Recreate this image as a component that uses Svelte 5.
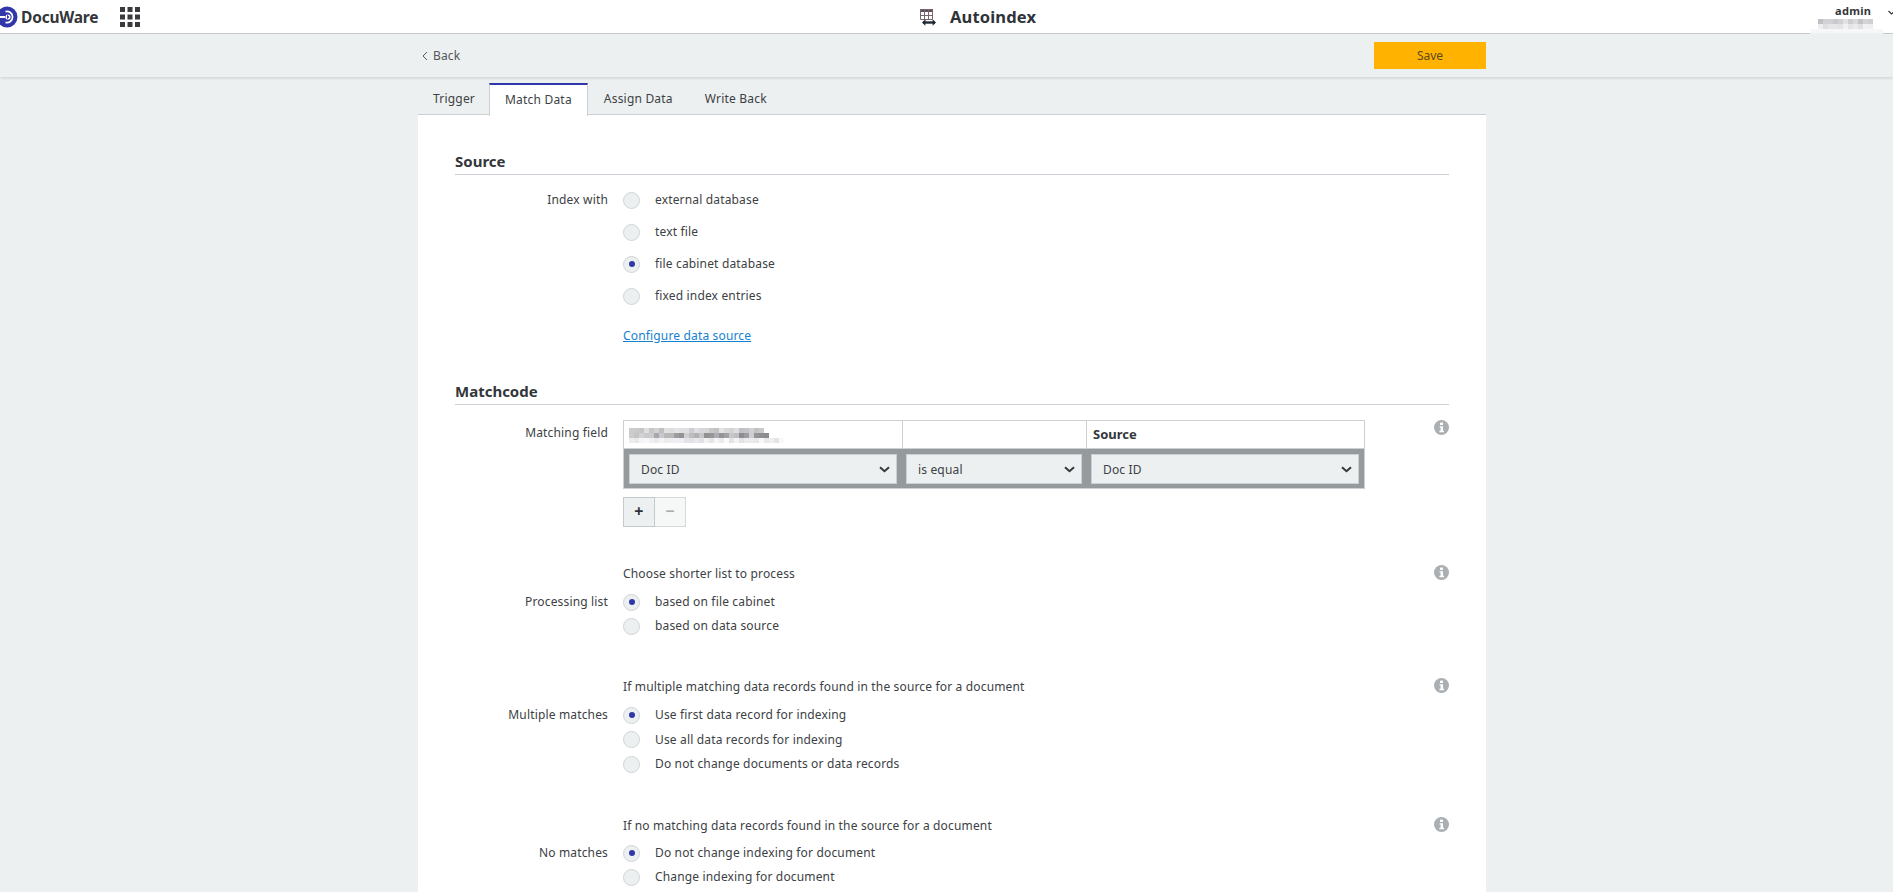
<script lang="ts">
	const tabs = ['Trigger', 'Match Data', 'Assign Data', 'Write Back'];
	const sources = [
		{ label: 'external database', on: false },
		{ label: 'text file', on: false },
		{ label: 'file cabinet database', on: true },
		{ label: 'fixed index entries', on: false }
	];
	const groups = [
		{
			cls: 'g-proc',
			hint: 'Choose shorter list to process',
			label: 'Processing list',
			options: [
				{ label: 'based on file cabinet', on: true },
				{ label: 'based on data source', on: false }
			]
		},
		{
			cls: 'g-multi',
			hint: 'If multiple matching data records found in the source for a document',
			label: 'Multiple matches',
			options: [
				{ label: 'Use first data record for indexing', on: true },
				{ label: 'Use all data records for indexing', on: false },
				{ label: 'Do not change documents or data records', on: false }
			]
		},
		{
			cls: 'g-none',
			hint: 'If no matching data records found in the source for a document',
			label: 'No matches',
			options: [
				{ label: 'Do not change indexing for document', on: true },
				{ label: 'Change indexing for document', on: false }
			]
		}
	];

	// the reference blurs out private names, so rebuild that pixelation as tiles
	function tiles(count: number, base: number, spread: number, seed: number): string[] {
		const out: string[] = [];
		let s = seed;
		for (let i = 0; i < count; i++) {
			s = (s * 37 + 23) % 97;
			const v = Math.min(255, base + Math.round((s / 96) * spread));
			out.push(`rgb(${v},${v},${Math.min(255, v + (s % 3) * 3)})`);
		}
		return out;
	}

	const nameRows = [tiles(27, 188, 40, 3), tiles(28, 135, 75, 7), tiles(31, 226, 24, 11)];
	const userRows = [tiles(11, 170, 50, 5), tiles(11, 215, 26, 9)];
</script>

{#snippet infoIcon()}
	<svg class="info" viewBox="0 0 15 15" width="15" height="15">
		<circle cx="7.5" cy="7.5" r="7.5" fill="#a9afb3" />
		<rect x="6" y="2.6" width="3" height="2.4" fill="#fff" />
		<path d="M5.6 6.2h3.4v4.6h1v1.4H5.4v-1.4h1.2V7.6h-1z" fill="#fff" />
	</svg>
{/snippet}

{#snippet chevron()}
	<svg class="chev" viewBox="0 0 11 7" width="11" height="7">
		<path d="M1 1.2l4.5 4 4.5-4" fill="none" stroke="#33383b" stroke-width="2" />
	</svg>
{/snippet}

{#snippet radio(on: boolean)}
	<span class="radio">{#if on}<span class="dot"></span>{/if}</span>
{/snippet}

<div class="page">
	<header class="top">
		<div class="brand">
			<svg class="logo" viewBox="0 0 18 22" width="18" height="22">
				<circle cx="7" cy="11" r="10.5" fill="#3137a8" />
				<path d="M5.5 5.6a5.6 5.6 0 1 1 0 10.8" fill="none" stroke="#fff" stroke-width="1.7" />
				<circle cx="8" cy="11" r="2.6" fill="#fff" />
				<path d="M0 11h5" stroke="#fff" stroke-width="2" />
				<path d="M7 8.8L9.4 11 7 13.2z" fill="#3137a8" />
			</svg>
			<span class="brand-name">DocuWare</span>
			<svg class="apps" viewBox="0 0 20 20" width="20" height="20">
				{#each [0, 7.5, 15] as y}
					{#each [0, 7.5, 15] as x}
						<rect {x} {y} width="5" height="5" fill="#3a3a3e" />
					{/each}
				{/each}
			</svg>
		</div>
		<div class="title">
			<svg viewBox="0 0 18 18" width="18" height="18">
				<rect x="1" y="1" width="13" height="3" fill="#5c5058" />
				<path d="M1.5 1.5h12v10h-12zM1.5 7.5h12M5.5 1.5v10M9.5 1.5v10" fill="none" stroke="#7a6470" stroke-width="1" />
				<path d="M4 14.5h12" stroke="#1f2a33" stroke-width="2.4" />
				<path d="M6.4 11.2L3 14.5l3.4 3.3zM13.6 11.2l3.4 3.3-3.4 3.3z" fill="#1f2a33" />
			</svg>
			<span>Autoindex</span>
		</div>
		<div class="user">
			<span class="user-name">admin</span>
			<div class="user-blur">
				{#each userRows as row}
					<div>{#each row as c}<i style="background:{c}"></i>{/each}</div>
				{/each}
			</div>
			<div class="user-fade"></div>
		</div>
		<svg class="user-caret" viewBox="0 0 5 5" width="5" height="5"><path d="M0.5 1l3 3 3-3" fill="none" stroke="#33363a" stroke-width="1.2" /></svg>
	</header>

	<div class="toolbar">
		<div class="toolbar-in">
			<a class="back" href="#back">
				<svg viewBox="0 0 6 10" width="6" height="10"><path d="M5 1L1 5l4 4" fill="none" stroke="#555b5f" stroke-width="1" /></svg>
				Back
			</a>
			<button class="save">Save</button>
		</div>
	</div>

	<main class="column">
		<nav class="tabs">
			{#each tabs as t, i}
				<span class="tab" class:active={i === 1}>{t}</span>
			{/each}
		</nav>

		<section class="panel">
			<h2 class="first">Source</h2>
			<div class="form-row sources">
				<div class="lbl">Index with</div>
				<div class="opts">
					{#each sources as s}
						<div class="opt">
							{@render radio(s.on)}
							<span>{s.label}</span>
						</div>
					{/each}
					<a class="cfg" href="#cfg">Configure data source</a>
				</div>
			</div>

			<h2 class="second">Matchcode</h2>
			<div class="form-row match">
				<div class="lbl">Matching field</div>
				<div class="match-body">
					<div class="grid">
						<div class="cell c1">
							<div class="blur">
								{#each nameRows as row}
									<div>{#each row as c}<i style="background:{c}"></i>{/each}</div>
								{/each}
							</div>
						</div>
						<div class="cell c2"></div>
						<div class="cell c3"><b>Source</b></div>
						<div class="sel-row">
							<div class="sel s1">Doc ID {@render chevron()}</div>
							<div class="sel s2">is equal {@render chevron()}</div>
							<div class="sel s3">Doc ID {@render chevron()}</div>
						</div>
					</div>
					<div class="steppers">
						<span class="step plus">+</span>
						<span class="step minus">−</span>
					</div>
				</div>
				{@render infoIcon()}
			</div>

			{#each groups as g}
				<div class="group {g.cls}">
					<div class="hint-row">
						<div class="hint">{g.hint}</div>
						{@render infoIcon()}
					</div>
					{#each g.options as o, i}
						<div class="form-row tight">
							<div class="lbl">{i === 0 ? g.label : ''}</div>
							<div class="opt">
								{@render radio(o.on)}
								<span>{o.label}</span>
							</div>
						</div>
					{/each}
				</div>
			{/each}
		</section>
	</main>
</div>

<style>
	:global(body) {
		margin: 0;
		background: #edf0f1;
		overflow: hidden;
	}

	.page {
		height: 892px;
		overflow: hidden;
		font-family: 'Noto Sans', 'Open Sans', sans-serif;
		font-size: 12px;
		letter-spacing: 0.16px;
		color: #3c4144;
		position: relative;
	}

	/* Top bar */
	.top {
		height: 33px;
		background: #fff;
		border-bottom: 1px solid #ccced2;
		display: flex;
		align-items: center;
		position: relative;
	}

	.brand {
		display: flex;
		align-items: center;
	}

	.logo { flex: none; }

	.brand-name {
		font-size: 15.5px;
		font-weight: 700;
		color: #33363a;
		margin-left: 3px;
		letter-spacing: -0.2px;
	}

	.apps { margin-left: 22px; }

	.title {
		position: absolute;
		left: 919px;
		top: 6px;
		display: flex;
		align-items: center;
		gap: 13px;
		font-size: 16.5px;
		font-weight: 700;
		color: #2e3338;
		line-height: 22px;
	}

	.user {
		position: absolute;
		left: 1810px;
		top: 0;
		width: 73px;
		height: 35px;
	}

	.user-name {
		display: block;
		font-size: 11px;
		font-weight: 700;
		color: #33363a;
		line-height: 15px;
		margin: 3px 0 0 25px;
		letter-spacing: 0.3px;
	}

	.user-blur {
		margin: 1px 0 0 8px;
		opacity: 0.8;
	}

	.user-blur div {
		display: flex;
		height: 5px;
	}

	.user-blur i,
	.blur i {
		width: 5px;
		height: 5px;
	}

	.user-fade {
		height: 5px;
		background: #f6f7f8;
	}

	.user-caret {
		position: absolute;
		left: 1888px;
		top: 10px;
	}

	/* Toolbar */
	.toolbar {
		height: 43px;
		background: #edf0f1;
		box-shadow: 0 1px 3px rgba(0, 0, 0, 0.14);
		position: relative;
	}

	.toolbar-in {
		width: 1068px;
		margin-left: 418px;
		height: 100%;
		display: flex;
		align-items: center;
		justify-content: space-between;
	}

	.back {
		color: #50565a;
		text-decoration: none;
		display: flex;
		align-items: center;
		gap: 5px;
		margin-left: 4px;
	}

	.save {
		width: 112px;
		height: 27px;
		border: none;
		background: #ffb300;
		color: #5a4a20;
		font: inherit;
	}

	/* Tabs + panel */
	.column {
		width: 1068px;
		margin-left: 418px;
		padding-top: 6px;
	}

	.tabs {
		display: flex;
		height: 31px;
		border-bottom: 1px solid #ccd0d4;
		letter-spacing: 0.2px;
	}

	.tab {
		padding: 0 16px;
		line-height: 32px;
		color: #3c4144;
	}

	.tab:first-child { padding: 0 14px 0 15px; }

	.tab.active {
		background: #fff;
		border-top: 2px solid #3137a8;
		border-left: 1px solid #ccd0d4;
		border-right: 1px solid #ccd0d4;
		padding: 0 15px 1px;
		line-height: 30px;
		height: 30px;
		margin-bottom: -1px;
	}

	.panel {
		background: #fff;
		padding: 0 37px;
		height: 780px;
	}

	h2 {
		margin: 0;
		font-size: 15px;
		font-weight: 700;
		letter-spacing: 0;
		color: #33363a;
		line-height: 20px;
		border-bottom: 1px solid #ccd0d6;
		padding-bottom: 3px;
	}

	h2.first { padding-top: 36px; }
	h2.second { margin-top: 36px; }

	.form-row {
		display: flex;
		align-items: flex-start;
	}

	.lbl {
		width: 153px;
		flex: none;
		text-align: right;
		margin-right: 15px;
		line-height: 18px;
		color: #3c4144;
	}

	.opts {
		display: flex;
		flex-direction: column;
	}

	.sources { margin-top: 16px; }

	.sources .opt { margin-bottom: 14px; }

	.opt {
		display: flex;
		align-items: center;
		height: 18px;
		line-height: 18px;
	}

	.radio {
		width: 15px;
		height: 15px;
		border: 1px solid #d0d4d6;
		border-radius: 50%;
		background: #edf0f1;
		display: inline-flex;
		align-items: center;
		justify-content: center;
		margin-right: 15px;
		flex: none;
	}

	.dot {
		width: 6px;
		height: 6px;
		border-radius: 50%;
		background: #3137a8;
	}

	.cfg {
		color: #1481d0;
		margin-top: 8px;
		line-height: 18px;
	}

	/* Matchcode table */
	.match {
		margin-top: 15px;
		position: relative;
	}

	.match .lbl { margin-top: 4px; }

	.match-body { flex: none; }

	.grid {
		box-sizing: border-box;
		width: 742px;
		display: grid;
		grid-template-columns: 279px 184px 277px;
		border: 1px solid #ccd0d4;
		border-bottom: none;
	}

	.cell {
		height: 27px;
		line-height: 27px;
		box-sizing: border-box;
	}

	.c1, .c2 { border-right: 1px solid #ccd0d4; }

	.c3 {
		padding-left: 6px;
		color: #33363a;
		font-size: 13px;
		letter-spacing: 0;
	}

	.blur { padding: 7px 0 0 5px; }

	.blur div { display: flex; height: 5px; }

	.sel-row {
		grid-column: 1 / -1;
		box-sizing: border-box;
		height: 41px;
		background: #959a9d;
		border: 1px solid #ccd0d4;
		margin: 0 -1px;
		padding: 5px 5px 4px;
		display: flex;
		gap: 9px;
	}

	.sel {
		box-sizing: border-box;
		background: #edf0f1;
		border: 1px solid #ccd0d4;
		height: 30px;
		padding: 0 6px 0 11px;
		display: flex;
		align-items: center;
		justify-content: space-between;
	}

	.s1, .s3 { width: 268px; }
	.s2 { width: 176px; }

	.steppers {
		display: flex;
		margin-top: 8px;
	}

	.step {
		box-sizing: border-box;
		width: 32px;
		height: 30px;
		text-align: center;
		line-height: 27px;
		font-weight: 700;
		font-size: 16px;
		border: 1px solid #d4d8da;
	}

	.plus {
		background: #edf0f1;
		color: #2e3338;
		border-color: #c4c9cc;
	}

	.minus {
		width: 31px;
		background: #f6f8f8;
		color: #a9afb3;
		border-left: none;
	}

	.info { flex: none; }

	.match > .info {
		position: absolute;
		right: 0;
		top: 0;
	}

	/* Radio groups */
	.g-proc { margin-top: 38px; }
	.g-multi { margin-top: 43px; }
	.g-none { margin-top: 44px; }

	.hint-row {
		padding-left: 168px;
		height: 18px;
		line-height: 18px;
		margin-bottom: 10px;
		display: flex;
		justify-content: space-between;
		align-items: center;
	}

	.hint-row .info { margin-top: -4px; }

	.g-none .hint-row { margin-bottom: 9px; }

	.tight { margin-bottom: 6px; }

	.g-multi .tight { margin-bottom: 6.5px; }
</style>
